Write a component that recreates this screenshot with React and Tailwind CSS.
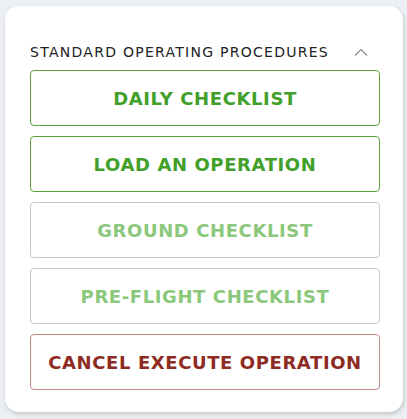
export default function App() {
  const btns = [
    { t: "DAILY CHECKLIST", c: "border-[#5aa03c] text-[#42a02a]" },
    { t: "LOAD AN OPERATION", c: "border-[#5aa03c] text-[#42a02a]" },
    { t: "GROUND CHECKLIST", c: "border-[#c9c5c7] text-[#8cc87c]" },
    { t: "PRE-FLIGHT CHECKLIST", c: "border-[#c9c5c7] text-[#8cc87c]" },
    { t: "CANCEL EXECUTE OPERATION", c: "border-[#c58a87] text-[#8e2b22]" },
  ];
  return (
    <div className="w-[407px] h-[419px] bg-[#eceff3] pt-[6px] pl-[5px]" style={{ fontFamily: '"DejaVu Sans", sans-serif' }}>
      <div className="w-[398px] h-[406px] bg-white rounded-[14px] shadow-[1px_2px_4px_rgba(0,0,0,0.18)] pl-[25px] pt-[36px]">
        <div className="w-[350px] flex items-center justify-between h-[20px] mb-[8px]">
          <span className="text-[14px] tracking-[1.27px] text-[#222]">STANDARD OPERATING PROCEDURES</span>
          <svg width="14" height="8" viewBox="0 0 14 8" className="mr-[12px]">
            <path d="M1 7.5 L7 1.5 L13 7.5" fill="none" stroke="#8a8a8a" strokeWidth="1.2" />
          </svg>
        </div>
        <div className="flex flex-col gap-[10px]">
          {btns.map((b) => (
            <div key={b.t} className={`w-[350px] h-[56px] border rounded-[4px] flex items-center justify-center font-bold text-[18px] tracking-[0.6px] ${b.c}`}>
              {b.t}
            </div>
          ))}
        </div>
      </div>
    </div>
  );
}
